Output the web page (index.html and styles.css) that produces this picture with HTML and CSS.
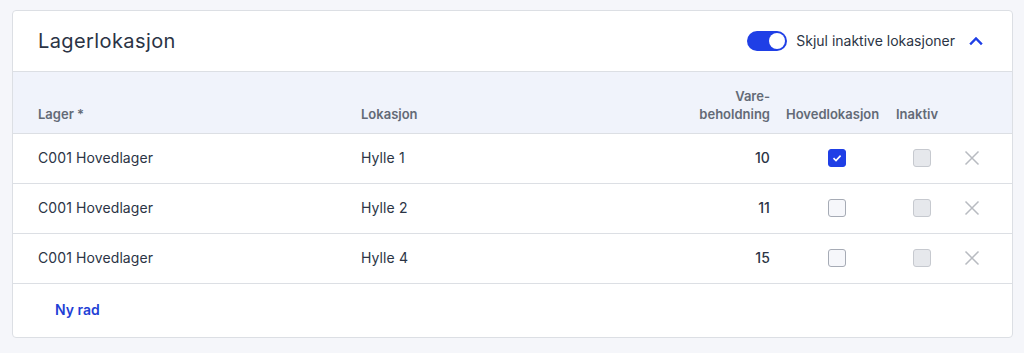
FILE: index.html
```html
<!DOCTYPE html>
<html lang="no">
	<head>
		<meta charset="utf-8">
		<title>Lagerlokasjon</title>
		<link rel="stylesheet" href="styles.css">
	</head>
	<body>
		<div class="card">
			<div class="card-head">
				<h2 class="title">Lagerlokasjon</h2>
				<div class="head-tools">
					<span class="toggle"><span class="knob"></span></span>
					<span class="toggle-label">Skjul inaktive lokasjoner</span>
					<svg class="chevron" width="16" height="16" viewBox="0 0 16 16"><path d="M3 10.5 L8 5.5 L13 10.5" fill="none" stroke="#1f3fe6" stroke-width="2.4" stroke-linecap="square"/></svg>
				</div>
			</div>
			<table class="grid">
				<colgroup>
					<col class="c-lager"><col class="c-lok"><col class="c-qty"><col class="c-main"><col class="c-inact"><col class="c-del">
				</colgroup>
				<thead>
					<tr>
						<th class="first">Lager *</th>
						<th>Lokasjon</th>
						<th class="num">Vare-<br>beholdning</th>
						<th>Hovedlokasjon</th>
						<th>Inaktiv</th>
						<th></th>
					</tr>
				</thead>
				<tbody>
					<tr>
						<td class="first">C001 Hovedlager</td>
						<td>Hylle 1</td>
						<td class="num">10</td>
						<td class="cb"><span class="box checked"><svg width="12" height="12" viewBox="0 0 12 12"><path d="M2.5 6.2 L5 8.6 L9.6 3.6" fill="none" stroke="#fff" stroke-width="1.6"/></svg></span></td>
						<td class="cb2"><span class="box disabled"></span></td>
						<td class="del"><svg width="16" height="16" viewBox="0 0 16 16"><path d="M1.5 1.5 L14.5 14.5 M14.5 1.5 L1.5 14.5" stroke="#b8bbc1" stroke-width="1.5"/></svg></td>
					</tr>
					<tr>
						<td class="first">C001 Hovedlager</td>
						<td>Hylle 2</td>
						<td class="num">11</td>
						<td class="cb"><span class="box"></span></td>
						<td class="cb2"><span class="box disabled"></span></td>
						<td class="del"><svg width="16" height="16" viewBox="0 0 16 16"><path d="M1.5 1.5 L14.5 14.5 M14.5 1.5 L1.5 14.5" stroke="#b8bbc1" stroke-width="1.5"/></svg></td>
					</tr>
					<tr>
						<td class="first">C001 Hovedlager</td>
						<td>Hylle 4</td>
						<td class="num">15</td>
						<td class="cb"><span class="box"></span></td>
						<td class="cb2"><span class="box disabled"></span></td>
						<td class="del"><svg width="16" height="16" viewBox="0 0 16 16"><path d="M1.5 1.5 L14.5 14.5 M14.5 1.5 L1.5 14.5" stroke="#b8bbc1" stroke-width="1.5"/></svg></td>
					</tr>
				</tbody>
			</table>
			<div class="card-foot">
				<a class="add-row" href="#">Ny rad</a>
			</div>
		</div>
	</body>
</html>
```

FILE: styles.css
```css
html * {margin:0; padding:0; box-sizing:border-box;}
body {font:14px/1.4 Inter, "Liberation Sans", sans-serif; background:#f5f6fa; color:#2b3445; padding:10px 11px 0 12px;}
.card {width:1001px; background:#fff; border:1px solid #dcdfe4; border-radius:4px; overflow:hidden;}
.card-head {height:61px; display:flex; align-items:center; justify-content:space-between; padding:0 28px 0 25px; border-bottom:1px solid #dcdfe4;}
.title {font-size:20px; font-weight:400; color:#2b3445; letter-spacing:0.4px;}
.head-tools {display:flex; align-items:center;}
.toggle {width:40px; height:20px; border-radius:10px; background:#1f3fe6; display:flex; align-items:center; justify-content:flex-end; padding:2px;}
.knob {width:16px; height:16px; border-radius:50%; background:#fff;}
.toggle-label {margin:0 13px 0 9px; font-size:14px; color:#2b3445;}
.chevron {display:block;}
table.grid {width:999px; border-collapse:collapse; table-layout:fixed;}
col.c-lager {width:336px;}
col.c-lok {width:341px;}
col.c-qty {width:88px;}
col.c-main {width:110px;}
col.c-inact {width:59px;}
col.c-del {width:65px;}
thead tr {height:61px; background:#f0f3fb;}
th {font-size:13px; font-weight:600; color:#636a76; text-align:left; vertical-align:bottom; padding:0 8px 10px 12px; line-height:18px; white-space:nowrap;}
th.first, td.first {padding-left:25px;}
th.num, td.num {text-align:right; padding-right:8px; padding-left:0;}
th:nth-child(4), th:nth-child(5) {padding-left:8px;}
tbody tr {height:50px; border-top:1px solid #dcdfe4;}
tbody tr:last-child {border-bottom:1px solid #dcdfe4;}
td {padding:0 8px 0 12px; vertical-align:middle; color:#2b3445; letter-spacing:0.1px;}
td.num {font-weight:500;}
td.cb {padding-left:50px;}
td.cb2 {padding-left:25px;}
td.del {padding-left:17px;}
td.del svg {display:block;}
.box {display:flex; align-items:center; justify-content:center; width:18px; height:18px; border:1.5px solid #a6abb5; border-radius:3px; background:#f6f7fb;}
.box.checked {background:#1f3fe6; border-color:#1f3fe6;}
.box.disabled {background:#e6e8ec; border-color:#c6c9cf;}
.card-foot {height:53px; display:flex; align-items:center; padding-left:42px;}
.add-row {font-weight:600; color:#1f3fd6; text-decoration:none; font-size:14px;}
```
